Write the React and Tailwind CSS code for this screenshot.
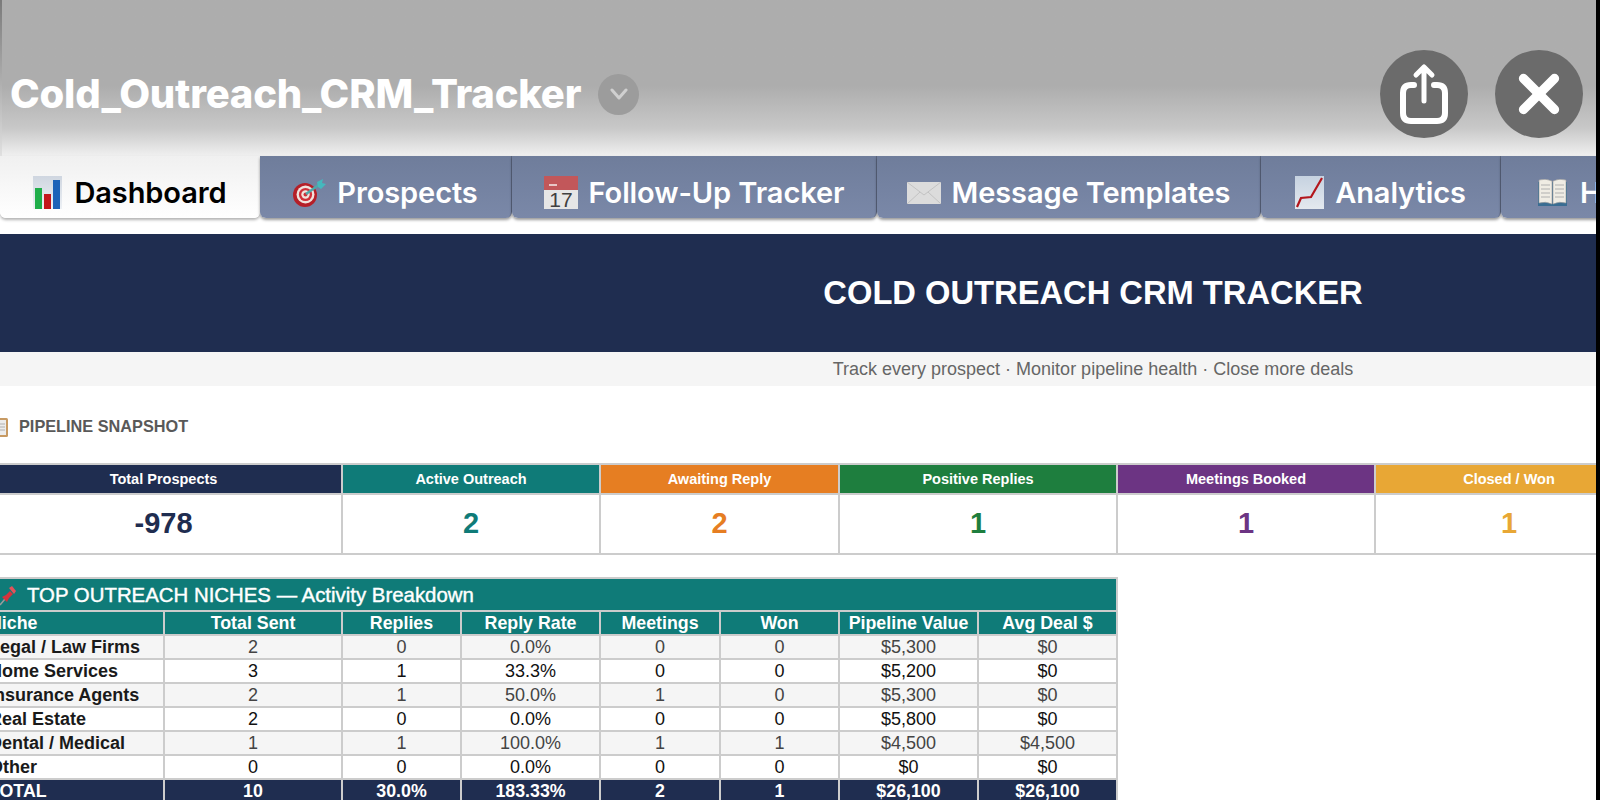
import { X } from 'lucide-react';

const sans = "font-['Liberation_Sans',Arial,sans-serif]";

function BarsIcon() {
  return (
    <svg className="shrink-0" width="29" height="33" viewBox="0 0 29 33">
      <defs>
        <linearGradient id="barsBg" x1="0" y1="0" x2="0" y2="1">
          <stop offset="0" stopColor="#cfd6e0" />
          <stop offset="1" stopColor="#eef1f5" />
        </linearGradient>
      </defs>
      <rect width="29" height="33" fill="url(#barsBg)" />
      <rect x="2" y="12" width="7" height="21" fill="#1fae4a" />
      <rect x="11" y="18" width="7" height="15" fill="#c4161c" />
      <rect x="20" y="4" width="7" height="29" fill="#1c62b8" />
    </svg>
  );
}

function DartIcon() {
  return (
    <svg className="shrink-0" width="33" height="28" viewBox="0 0 33 28">
      <circle cx="12" cy="16" r="12" fill="#b51f28" />
      <circle cx="12.5" cy="15.5" r="9" fill="#f1e3dd" />
      <circle cx="12.5" cy="15.5" r="6.6" fill="#cf2f38" />
      <circle cx="12.5" cy="15.5" r="4.2" fill="#f1e3dd" />
      <circle cx="12.5" cy="15.5" r="2" fill="#cf2f38" />
      <path d="M13 15 L27 5" stroke="#4fa7a8" strokeWidth="2.5" />
      <path d="M24 3 L30 0 L29 4 L33 5 L28 10 L25 8 Z" fill="#45b8bd" />
    </svg>
  );
}

function CalendarIcon() {
  return (
    <svg className="shrink-0" width="34" height="33" viewBox="0 0 34 33">
      <rect width="34" height="33" fill="#e6e6e6" />
      <rect width="34" height="14" fill="#c2575a" />
      <rect x="5" y="8" width="8" height="2" fill="#e8c6c6" />
      <text x="17" y="31" textAnchor="middle" fontSize="21" fill="#404040" fontFamily="Liberation Sans">17</text>
    </svg>
  );
}

function EnvelopeIcon() {
  return (
    <svg className="shrink-0" width="34" height="22" viewBox="0 0 34 22">
      <rect width="34" height="22" fill="#dcdcdc" />
      <path d="M0 0 L17 13 L34 0 M0 22 L13 10 M34 22 L21 10" fill="none" stroke="#c2c2c2" strokeWidth="1" />
    </svg>
  );
}

function LineIcon() {
  return (
    <svg className="shrink-0" width="29" height="33" viewBox="0 0 29 33">
      <defs>
        <linearGradient id="lineBg" x1="0" y1="0" x2="0" y2="1">
          <stop offset="0" stopColor="#c6d2e0" />
          <stop offset="1" stopColor="#e4e9ef" />
        </linearGradient>
      </defs>
      <rect width="29" height="33" fill="url(#lineBg)" />
      <path d="M2 31 L6 22 L16 21 L27 2" fill="none" stroke="#b3161c" strokeWidth="2.2" />
    </svg>
  );
}

function BookIcon() {
  return (
    <svg className="shrink-0" width="31" height="27" viewBox="0 0 31 27">
      <rect x="1" y="3" width="29" height="24" fill="#3a6d92" />
      <path d="M2 1 Q9 -1 15 2 L15 25 Q9 22 2 24 Z" fill="#efece4" stroke="#9a9a9a" strokeWidth="0.6" />
      <path d="M29 1 Q22 -1 16 2 L16 25 Q22 22 29 24 Z" fill="#efece4" stroke="#9a9a9a" strokeWidth="0.6" />
      <path d="M4 6 H13 M4 10 H13 M4 14 H13 M4 18 H13 M18 6 H27 M18 10 H27 M18 14 H27 M18 18 H27" stroke="#b0b0b0" strokeWidth="1" />
    </svg>
  );
}

function ClipboardIcon() {
  return (
    <svg className="shrink-0" width="9" height="20" viewBox="0 0 9 20">
      <rect x="-8" y="1" width="16" height="19" rx="1.5" fill="#c79a63" />
      <rect x="-8" y="3" width="14" height="15" fill="#ececec" />
      <path d="M0 7 H5 M0 10 H5 M0 13 H5" stroke="#b0b0b0" strokeWidth="1" />
    </svg>
  );
}

function PinIcon() {
  return (
    <svg className="shrink-0" width="16" height="20" viewBox="0 0 16 20">
      <path d="M0 19 L5 13" stroke="#9c9c9c" strokeWidth="1.5" />
      <path d="M2 11 L6 9 L10 5 L13 8 L9 12 L7 16 Z" fill="#d4333c" />
      <path d="M9 2 L12 0 L16 5 L14 8 Z" fill="#e4525a" />
    </svg>
  );
}

function ShareIcon() {
  return (
    <svg width="50" height="62" viewBox="0 0 50 62" fill="none" stroke="white" strokeLinecap="round" strokeLinejoin="round">
      <path d="M15 22 H12 Q4 22 4 30 V50 Q4 58 12 58 H38 Q46 58 46 50 V30 Q46 22 38 22 H35" strokeWidth="6" />
      <path d="M25 38 V5 M17 12 L25 4 L33 12" strokeWidth="5" />
    </svg>
  );
}

function Tab({ icon, label, width, active }) {
  return (
    <div
      className={
        active
          ? 'shrink-0 flex items-center justify-center gap-[12px] h-full pt-[11px] rounded-b-[6px] bg-gradient-to-b from-[#f0f0f0] to-white text-black shadow-[0_2px_3px_rgba(0,0,0,0.3)]'
          : 'shrink-0 flex items-center justify-center gap-[11px] h-full pt-[11px] rounded-b-[6px] bg-gradient-to-b from-[#6f7d9b] to-[#7a88a8] text-white shadow-[0_2px_3px_rgba(0,0,0,0.4)] border-r border-[#5c6780]'
      }
      style={{ width }}
    >
      {icon}
      <span className="text-[29px] font-semibold font-['Inter',sans-serif] tracking-[-0.1px] whitespace-nowrap">{label}</span>
    </div>
  );
}

const stats = [
  { label: 'Total Prospects', value: '-978', head: 'bg-[#1f2d50]', text: 'text-[#1f2d50]' },
  { label: 'Active Outreach', value: '2', head: 'bg-[#0f7b78]', text: 'text-[#0f7b78]' },
  { label: 'Awaiting Reply', value: '2', head: 'bg-[#e67e22]', text: 'text-[#e67e22]' },
  { label: 'Positive Replies', value: '1', head: 'bg-[#1e7e3e]', text: 'text-[#1e7e3e]' },
  { label: 'Meetings Booked', value: '1', head: 'bg-[#6c3483]', text: 'text-[#6c3483]' },
  { label: 'Closed / Won', value: '1', head: 'bg-[#e8a735]', text: 'text-[#e8a735]' },
];

const columns = ['Niche', 'Total Sent', 'Replies', 'Reply Rate', 'Meetings', 'Won', 'Pipeline Value', 'Avg Deal $'];

const rows = [
  ['Legal / Law Firms', '2', '0', '0.0%', '0', '0', '$5,300', '$0'],
  ['Home Services', '3', '1', '33.3%', '0', '0', '$5,200', '$0'],
  ['Insurance Agents', '2', '1', '50.0%', '1', '0', '$5,300', '$0'],
  ['Real Estate', '2', '0', '0.0%', '0', '0', '$5,800', '$0'],
  ['Dental / Medical', '1', '1', '100.0%', '1', '1', '$4,500', '$4,500'],
  ['Other', '0', '0', '0.0%', '0', '0', '$0', '$0'],
];

const totals = ['TOTAL', '10', '30.0%', '183.33%', '2', '1', '$26,100', '$26,100'];

const tableGrid = 'grid grid-cols-[177px_176px_117px_137px_118px_117px_137px_137px] gap-x-[2px]';

export default function App() {
  return (
    <div className={`relative w-[1600px] h-[800px] overflow-hidden bg-white ${sans}`}>
      {/* viewer header */}
      <div className="h-[156px] bg-gradient-to-b from-[#adadad] from-55% via-[#c8c8c8] via-82% to-[#f0f0f0] flex items-start">
        <div className="flex items-center pl-[10px] pt-[70px] flex-1">
          <span className="text-[40px] leading-[48px] font-extrabold text-white font-['Inter',sans-serif] tracking-[-0.2px]">
            Cold_Outreach_CRM_Tracker
          </span>
          <span className="ml-[17px] w-[41px] h-[41px] rounded-full bg-[#9c9c9c] flex items-center justify-center">
            <svg width="20" height="12" viewBox="0 0 20 12" fill="none" stroke="#d0d0d0" strokeWidth="3" strokeLinecap="round" strokeLinejoin="round">
              <path d="M3 2 L10 10 L17 2" />
            </svg>
          </span>
        </div>
        <div className="flex gap-[27px] pt-[50px] pr-[17px]">
          <button className="w-[88px] h-[88px] rounded-full bg-[#6b6b6b] flex items-center justify-center">
            <ShareIcon />
          </button>
          <button className="w-[88px] h-[88px] rounded-full bg-[#6b6b6b] flex items-center justify-center text-white">
            <X size={62} strokeWidth={3.6} />
          </button>
        </div>
      </div>

      {/* sheet tabs */}
      <div className="h-[62px] flex">
        <Tab active width={260} icon={<BarsIcon />} label="Dashboard" />
        <Tab width={252} icon={<DartIcon />} label="Prospects" />
        <Tab width={365} icon={<CalendarIcon />} label="Follow-Up Tracker" />
        <Tab width={384} icon={<EnvelopeIcon />} label="Message Templates" />
        <Tab width={240} icon={<LineIcon />} label="Analytics" />
        <div className="w-[120px] h-full pt-[11px] shrink-0 rounded-b-[6px] bg-gradient-to-b from-[#6f7d9b] to-[#7a88a8] flex items-center gap-[12px] pl-[36px] text-white shadow-[0_2px_3px_rgba(0,0,0,0.4)]">
          <BookIcon />
          <span className="text-[29px] font-semibold font-['Inter',sans-serif]">Help</span>
        </div>
      </div>

      {/* banner */}
      <div className="mt-[16px] h-[118px] bg-[#1f2d50] flex items-center justify-center pl-[586px]">
        <h1 className="text-[32.7px] font-bold text-white whitespace-nowrap">COLD OUTREACH CRM TRACKER</h1>
      </div>
      <div className="h-[34px] bg-[#f5f5f5] flex items-center justify-center pl-[586px] text-[18px] text-[#666]">
        Track every prospect · Monitor pipeline health · Close more deals
      </div>

      <div className="h-[77px] flex items-center gap-[10px] pt-[4px]">
        <ClipboardIcon />
        <span className="text-[16.3px] font-bold text-[#595959]">PIPELINE SNAPSHOT</span>
      </div>

      {/* stat cards */}
      <div className="-ml-[14px] w-[1650px] grid grid-cols-[355px_256px_237px_276px_256px_266px] gap-x-[2px] gap-y-[2px] bg-[#cccccc] py-[2px] pr-[2px]">
        {stats.map((s) => (
          <div key={s.label} className={`${s.head} h-[28px] pt-[1px] flex items-center justify-center text-[14.5px] font-bold text-white`}>
            {s.label}
          </div>
        ))}
        {stats.map((s) => (
          <div key={s.label} className={`bg-white h-[58px] flex items-center justify-center text-[29px] font-bold ${s.text}`}>
            {s.value}
          </div>
        ))}
      </div>

      {/* niches table */}
      <div className="-ml-[14px] mt-[22px] w-[1132px] bg-[#cccccc] p-[2px] pl-0">
        <div className="h-[31px] pt-[2px] bg-[#0f7b78] flex items-center gap-[11px] pl-[14px] text-white">
          <PinIcon />
          <span className="text-[20.4px] [-webkit-text-stroke:0.4px_white]">TOP OUTREACH NICHES — Activity Breakdown</span>
        </div>
        <div className={`${tableGrid} mt-[2px] h-[22px]`}>
          {columns.map((c, i) => (
            <div key={c} className={`bg-[#0f7b78] text-white font-bold text-[17.8px] leading-[22px] whitespace-nowrap ${i === 0 ? 'pl-[3px]' : 'text-center'}`}>
              {c}
            </div>
          ))}
        </div>
        {rows.map((row, r) => (
          <div key={row[0]} className={`${tableGrid} mt-[2px] h-[22px]`}>
            {row.map((cell, i) => (
              <div
                key={i}
                className={`text-[18px] leading-[22px] whitespace-nowrap ${r % 2 === 0 ? 'bg-[#f5f5f5] text-[#444]' : 'bg-white text-[#111]'} ${i === 0 ? 'pl-[3px] font-bold !text-[#1a1a1a]' : 'text-center'}`}
              >
                {cell}
              </div>
            ))}
          </div>
        ))}
        <div className={`${tableGrid} mt-[2px] h-[22px]`}>
          {totals.map((cell, i) => (
            <div key={i} className={`bg-[#1f2d50] text-white font-bold text-[17.8px] leading-[22px] whitespace-nowrap ${i === 0 ? 'pl-[3px]' : 'text-center'}`}>
              {cell}
            </div>
          ))}
        </div>
      </div>

      {/* screen edges */}
      <div className="absolute top-0 right-0 bottom-0 w-[4px] bg-black" />
      <div className="absolute top-0 left-0 h-[156px] w-[2px] bg-gradient-to-b from-[#7a7a7a] to-[#e0e0e0]" />
    </div>
  );
}
